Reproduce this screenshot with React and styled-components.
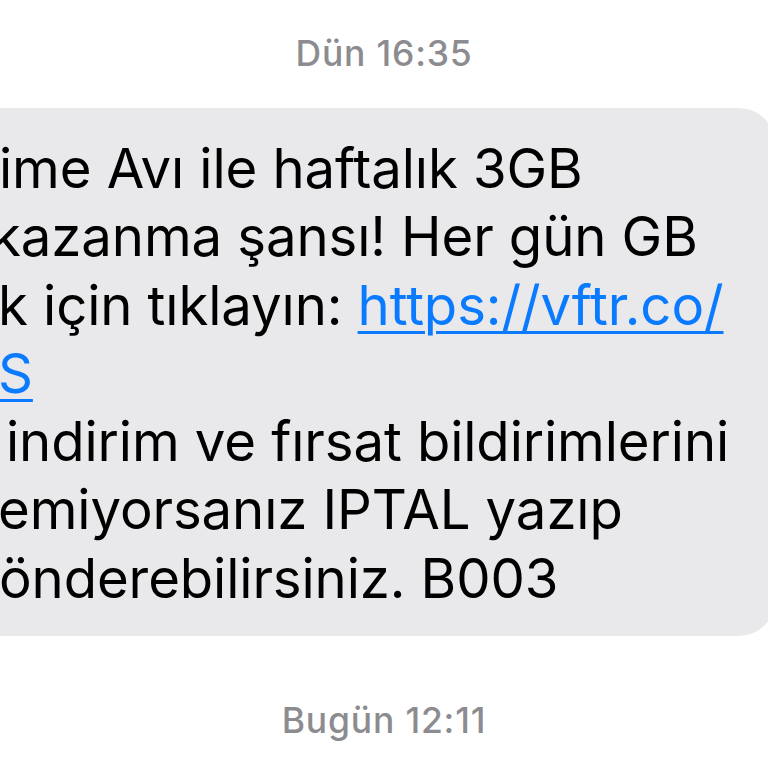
import React from 'react'
import styled, { createGlobalStyle } from 'styled-components'

const GlobalStyle = createGlobalStyle`
    html, body {
        margin: 0;
        padding: 0;
        background: #ffffff;
    }
    body {
        font-family: Inter, "Noto Sans", "Liberation Sans", sans-serif;
        -webkit-font-smoothing: antialiased;
    }
`

const Thread = styled.div`
    width: 768px;
    height: 768px;
    overflow: hidden;
    display: flex;
    flex-direction: column;
`

const Stamp = styled.div`
    text-align: center;
    color: #8c8c90;
    font-size: 35.5px;
    font-weight: 500;
    line-height: 40px;
    letter-spacing: 0.8px;
    margin-top: ${p => p.top}px;
`

const Row = styled.div`
    display: flex;
    margin: 34px -7px 0 -40px;
`

const Bubble = styled.div`
    flex: 1;
    background: #e9e9eb;
    border-radius: 36px;
    padding: 26px 0 24px 40px;
    color: #000;
    font-size: 54.5px;
    line-height: 68.3px;
    letter-spacing: -0.1px;
`

const Line = styled.div`
    white-space: nowrap;
    margin-left: ${p => p.shift || 0}px;
`

const Link = styled.a`
    color: #0a7aff;
    text-decoration: underline;
    text-decoration-thickness: 3px;
    text-underline-offset: 6px;
`

const App = () => (
    <Thread>
        <GlobalStyle />
        <Stamp top={34}>Dün 16:35</Stamp>
        <Row>
            <Bubble>
                <Line shift={-1}>ime Avı ile haftalık 3GB</Line>
                <Line shift={-9}>kazanma şansı! Her gün GB</Line>
                <Line shift={-2}>k için tıklayın: <Link href="#">https://vftr.co/</Link></Line>
                <Line shift={-2}><Link href="#">S</Link></Line>
                <Line shift={6}>indirim ve fırsat bildirimlerini</Line>
                <Line shift={-2}>emiyorsanız IPTAL yazıp</Line>
                <Line shift={-1}>önderebilirsiniz. B003</Line>
            </Bubble>
        </Row>
        <Stamp top={65}>Bugün 12:11</Stamp>
    </Thread>
)

export default App
